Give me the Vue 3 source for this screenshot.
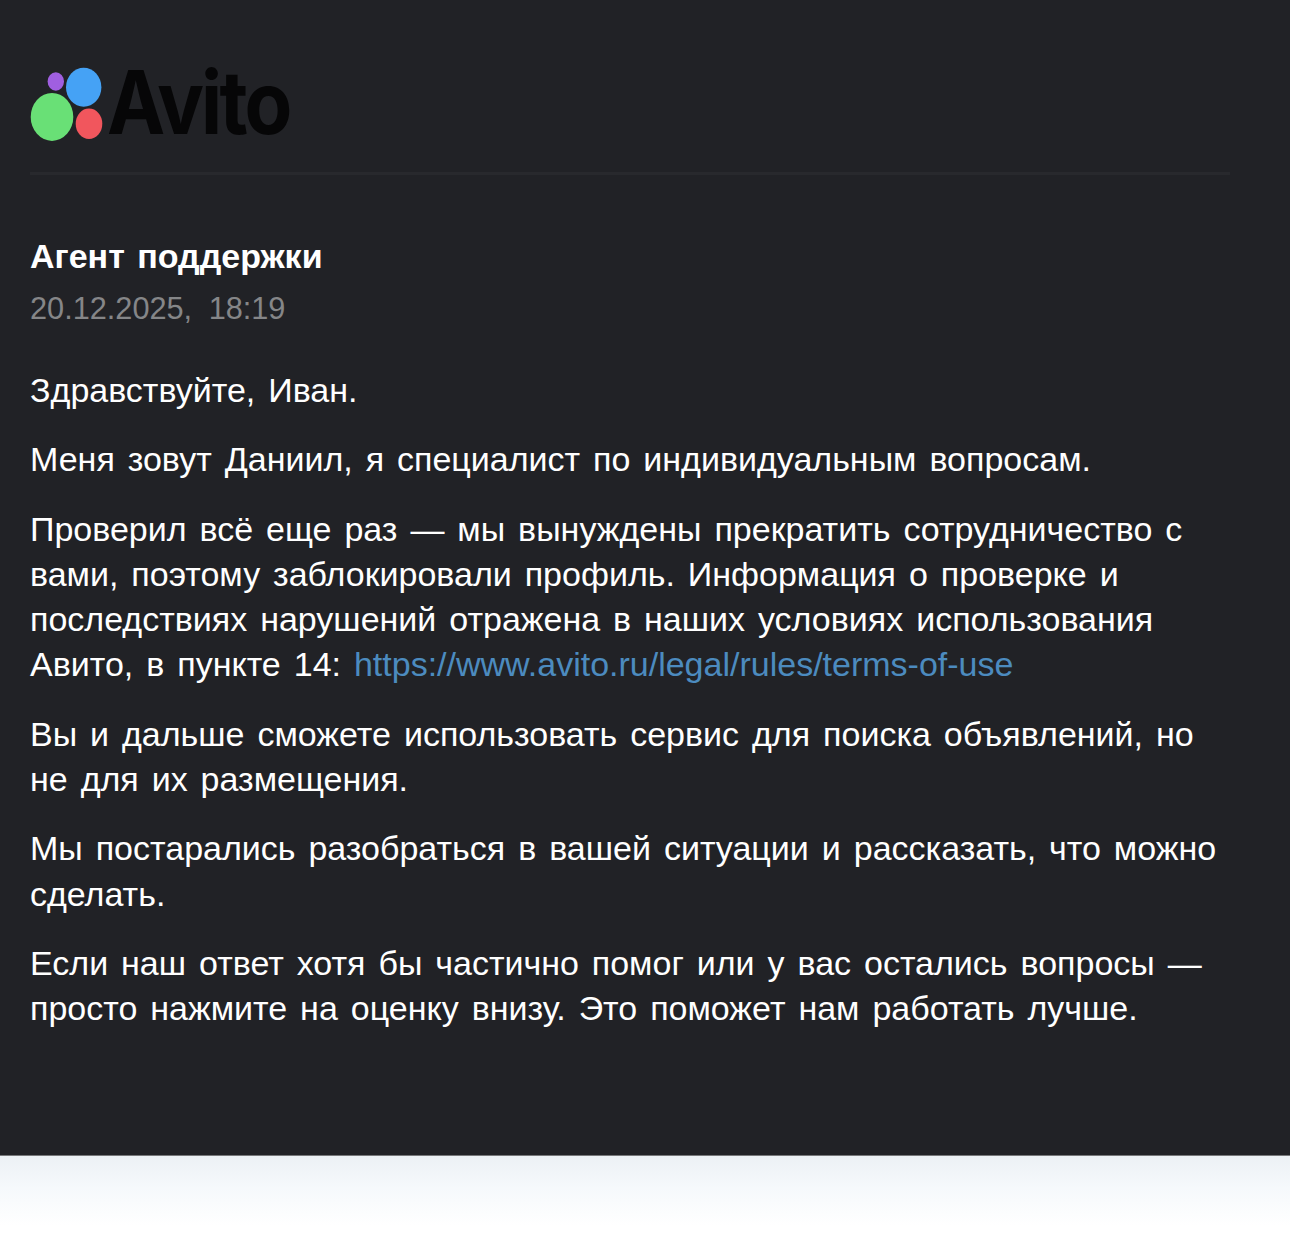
<script setup>
const paragraphs = [
  ['Вы и дальше сможете использовать сервис для поиска объявлений, но', 'не для их размещения.'],
  ['Мы постарались разобраться в вашей ситуации и рассказать, что можно', 'сделать.'],
  ['Если наш ответ хотя бы частично помог или у вас остались вопросы —', 'просто нажмите на оценку внизу. Это поможет нам работать лучше.']
]
</script>

<template>
  <div class="page">
    <main class="card">
      <header class="logo">
        <svg class="dots" width="74" height="76" viewBox="0 0 74 76" aria-hidden="true">
          <ellipse cx="25.8" cy="14.5" rx="8.2" ry="9.2" fill="#a05fe0" />
          <ellipse cx="53.7" cy="20.2" rx="17.7" ry="19.5" fill="#45a2f5" />
          <ellipse cx="22" cy="49.9" rx="21.3" ry="24" fill="#69e076" />
          <ellipse cx="59" cy="56.7" rx="13.3" ry="15.3" fill="#f1565d" />
        </svg>
        <span class="wordmark">Avito</span>
      </header>
      <hr class="rule" />
      <h1 class="author">Агент поддержки</h1>
      <div class="date">20.12.2025, 18:19</div>
      <div class="body">
        <p>Здравствуйте, Иван.</p>
        <p>Меня зовут Даниил, я специалист по индивидуальным вопросам.</p>
        <p>Проверил всё еще раз — мы вынуждены прекратить сотрудничество с<br />вами, поэтому заблокировали профиль. Информация о проверке и<br />последствиях нарушений отражена в наших условиях использования<br />Авито, в пункте 14: <a class="link">https://www.avito.ru/legal/rules/terms-of-use</a></p>
        <p v-for="(p, n) in paragraphs" :key="n"><template v-for="(l, i) in p" :key="i">{{ l }}<br v-if="i < p.length - 1" /></template></p>
      </div>
    </main>
    <div class="fade"></div>
  </div>
</template>

<style>
html, body { margin: 0; background: #fff; }
</style>

<style scoped>
.page {
  width: 1290px;
  height: 1249px;
  display: flex;
  flex-direction: column;
  font-family: "Liberation Sans", Arial, sans-serif;
  overflow: hidden;
}
.card {
  height: 1156px;
  flex: none;
  box-sizing: border-box;
  background: #212226;
  padding: 67px 60px 0 30px;
  border-bottom: 1px solid #77787a;
}
.logo {
  display: flex;
  align-items: flex-start;
  height: 76px;
}
.dots { display: block; flex: none; }
.wordmark {
  font-family: Inter, sans-serif;
  font-weight: 700;
  font-size: 78px;
  line-height: 72px;
  letter-spacing: -2.8px;
  color: #060607;
  margin-left: 3px;
  transform: scaleY(1.12);
}
.rule {
  border: 0;
  height: 3px;
  background: #28292d;
  margin: 29px 0 0;
}
.author {
  margin: 61px 0 0;
  font-size: 34px;
  line-height: 40px;
  font-weight: 700;
  color: #fff;
  word-spacing: 3px;
}
.date {
  margin-top: 13px;
  font-size: 30.7px;
  line-height: 40px;
  color: #858688;
  word-spacing: 8px;
}
.body { margin-top: 39px; color: #fff; font-size: 34px; line-height: 45.2px; word-spacing: 3.5px; }
.body p { margin: 0 0 24.2px; }
.link { color: #4c8bbf; word-spacing: 0; }
.fade {
  flex: 1;
  background: linear-gradient(#ecf1f5 0, #f6f9fc 35%, #fff 75%);
}
</style>
